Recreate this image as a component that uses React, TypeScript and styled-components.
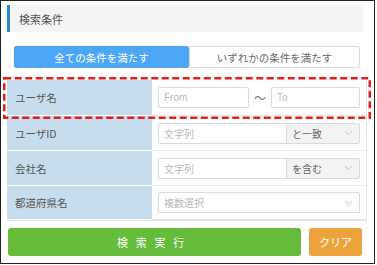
import React from "react";
import styled, { createGlobalStyle } from "styled-components";

const Global = createGlobalStyle`
  html, body { margin: 0; padding: 0; background: #fff; }
  body { font-family: "Noto Sans CJK JP", "Noto Sans", sans-serif; }
  * { box-sizing: border-box; }
`;

const Frame = styled.div`
  width: 375px;
  height: 264px;
  border: 1px solid #222;
  padding: 4px 6px 0 6px;
  display: flex;
  flex-direction: column;
`;

const Header = styled.div`
  height: 27px;
  width: 356px;
  background: #f4f4f4;
  border-left: 3px solid #2b86d0;
  display: flex;
  align-items: center;
  padding-left: 9px;
  font-size: 11px;
  color: #555;
`;

const Tabs = styled.div`
  margin: 14px 0 0 7px;
  width: 346px;
  height: 22px;
  display: grid;
  grid-template-columns: 175px 1fr;
`;

const Tab = styled.div<{ $active?: boolean }>`
  display: flex;
  align-items: center;
  justify-content: center;
  font-size: 10.5px;
  border-radius: 2px;
  background: ${(p) => (p.$active ? "#4ea6f6" : "#fff")};
  color: ${(p) => (p.$active ? "#fff" : "#666")};
  border: 1px solid ${(p) => (p.$active ? "#4ea6f6" : "#dcdcdc")};
`;

const Table = styled.div`
  position: relative;
  margin-top: 12px;
  width: 360px;
  display: grid;
  grid-template-columns: 145px 1fr;
  border-right: 1px solid #e2e2e2;
  border-bottom: 1px solid #e2e2e2;
`;

const Label = styled.div<{ $h: number }>`
  height: ${(p) => p.$h}px;
  background: #c7ddee;
  border-bottom: 1px solid #fff;
  display: flex;
  align-items: center;
  padding-left: 8px;
  font-size: 10.5px;
  color: #555;
`;

const Cell = styled.div<{ $h: number }>`
  height: ${(p) => p.$h}px;
  display: flex;
  align-items: center;
  padding: 0 6px;
  border-bottom: 1px solid #e6e6e6;
`;

const Input = styled.div<{ $w?: number }>`
  height: 21px;
  ${(p) => (p.$w ? `width: ${p.$w}px;` : "flex: 1;")}
  border: 1px solid #d9d9d9;
  border-radius: 2px;
  background: #fff;
  display: flex;
  align-items: center;
  padding-left: 5px;
  font-size: 10px;
  color: #b8b8b8;
  font-family: "Liberation Sans", "Noto Sans CJK JP", sans-serif;
`;

const Tilde = styled.div`
  width: 22px;
  text-align: center;
  font-size: 12px;
  color: #777;
`;

const Select = styled.div<{ $w?: number }>`
  height: 21px;
  ${(p) => (p.$w ? `width: ${p.$w}px;` : "flex: 1;")}
  border: 1px solid #d9d9d9;
  border-radius: 2px;
  background: ${(p) => (p.$w ? "#f3f3f3" : "#fff")};
  display: flex;
  align-items: center;
  justify-content: space-between;
  padding: 0 6px 0 5px;
  font-size: 10px;
  color: ${(p) => (p.$w ? "#666" : "#b8b8b8")};
`;

const Joined = styled.div`
  flex: 1;
  display: flex;
  & > ${Input} { border-right: none; border-radius: 2px 0 0 2px; }
  & > ${Select} { border-radius: 0 2px 2px 0; }
`;

const Highlight = styled.svg`
  position: absolute;
  left: -4px;
  top: -3px;
  width: 368px;
  height: 42px;
  pointer-events: none;
  overflow: visible;
`;

const Buttons = styled.div`
  margin-top: 7px;
  width: 354px;
  margin-left: 1px;
  display: grid;
  grid-template-columns: 293px 1fr;
  gap: 8px;
  height: 28px;
`;

const Button = styled.div<{ $color: string; $spacing?: string }>`
  background: ${(p) => p.$color};
  border-radius: 3px;
  color: #fff;
  font-size: 11px;
  display: flex;
  align-items: center;
  justify-content: center;
  letter-spacing: ${(p) => p.$spacing || "0"};
`;

const Chevron = () => (
  <svg width="9" height="6" viewBox="0 0 9 6">
    <path d="M1 1 L4.5 4.5 L8 1" fill="none" stroke="#c4c4c4" strokeWidth="1" />
  </svg>
);

export default function App() {
  return (
    <>
      <Global />
      <Frame>
        <Header>検索条件</Header>
        <Tabs>
          <Tab $active>全ての条件を満たす</Tab>
          <Tab>いずれかの条件を満たす</Tab>
        </Tabs>
        <Table>
          <Label $h={36}>ユーザ名</Label>
          <Cell $h={36}>
            <Input $w={91}>From</Input>
            <Tilde>〜</Tilde>
            <Input>To</Input>
          </Cell>
          <Label $h={35}>ユーザID</Label>
          <Cell $h={35}>
            <Joined>
              <Input>文字列</Input>
              <Select $w={74}>
                と一致
                <Chevron />
              </Select>
            </Joined>
          </Cell>
          <Label $h={35}>会社名</Label>
          <Cell $h={35}>
            <Joined>
              <Input>文字列</Input>
              <Select $w={74}>
                を含む
                <Chevron />
              </Select>
            </Joined>
          </Cell>
          <Label $h={34}>都道府県名</Label>
          <Cell $h={34}>
            <Select>
              複数選択
              <Chevron />
            </Select>
          </Cell>
          <Highlight viewBox="0 0 368 42">
            <rect
              x="1.25"
              y="1.25"
              width="365.5"
              height="39.5"
              fill="none"
              stroke="#e0201b"
              strokeWidth="2.5"
              strokeDasharray="7 3.5"
            />
          </Highlight>
        </Table>
        <Buttons>
          <Button $color="#66bb3b" $spacing="0.7em">検索実行</Button>
          <Button $color="#eda33b">クリア</Button>
        </Buttons>
      </Frame>
    </>
  );
}
